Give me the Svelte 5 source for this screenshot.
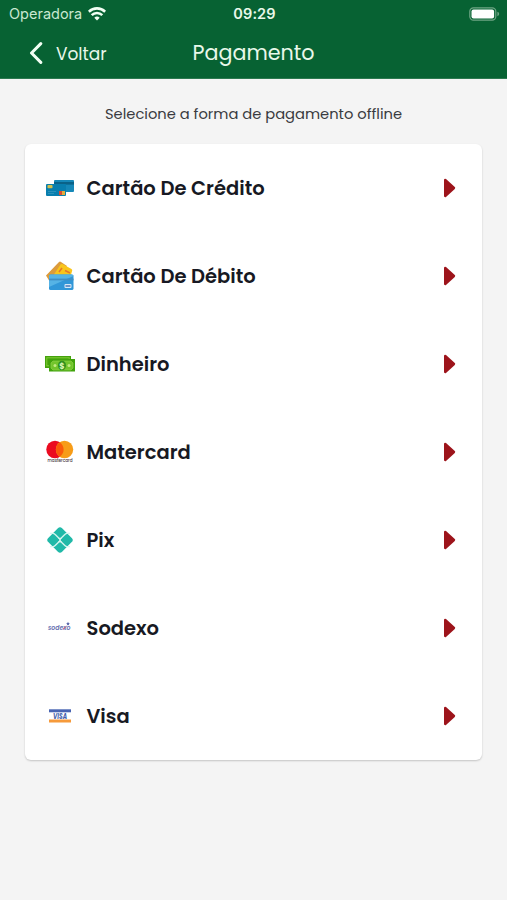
<script lang="ts">
  type Method = { id: string; label: string };

  const methods: Method[] = [
    { id: "credit", label: "Cartão De Crédito" },
    { id: "debit", label: "Cartão De Débito" },
    { id: "cash", label: "Dinheiro" },
    { id: "mastercard", label: "Matercard" },
    { id: "pix", label: "Pix" },
    { id: "sodexo", label: "Sodexo" },
    { id: "visa", label: "Visa" },
  ];
</script>

<div class="screen">
  <header>
    <div class="status">
      <div class="carrier">
        <span>Operadora</span>
        <svg width="18" height="14" viewBox="0 0 18 14" fill="none" stroke="#f2fff4" stroke-width="2.6">
          <path d="M.8 4.7a11.8 11.8 0 0 1 16.4 0" />
          <path d="M3.7 8.1a7.6 7.6 0 0 1 10.6 0" />
          <path d="M9 13.4 6.3 10.7a4 4 0 0 1 5.4 0Z" fill="#f2fff4" stroke="none" />
        </svg>
      </div>
      <span class="time">09:29</span>
      <svg class="battery" width="31" height="14" viewBox="0 0 31 14">
        <rect x=".8" y=".8" width="26" height="12.4" rx="3.6" fill="none" stroke="#6fa585" stroke-width="1.2" />
        <rect x="2.5" y="2.5" width="22.6" height="9" rx="2" fill="#fff" />
        <path d="M28.4 4.8q1.8.6 1.8 2.2t-1.8 2.2z" fill="#6fa585" />
      </svg>
    </div>
    <div class="nav">
      <button class="back">
        <svg width="14" height="22" viewBox="0 0 14 22" fill="none" stroke="#f2fff4" stroke-width="3">
          <path d="M11.8 1.6 2.5 11l9.3 9.4" stroke-linecap="round" stroke-linejoin="round" />
        </svg>
        <span>Voltar</span>
      </button>
      <h1>Pagamento</h1>
    </div>
  </header>

  <p class="hint">Selecione a forma de pagamento offline</p>

  <div class="card">
    {#each methods as m (m.id)}
      <button class="row">
        <svg class="logo" viewBox="0 0 30 30">
          {#if m.id === "credit"}
            <rect x="9" y="7" width="20" height="12" rx="1" fill="#1688b8" />
            <rect x="9" y="9" width="20" height="2.6" fill="#0a6288" />
            <rect x="1" y="11" width="20" height="12" rx="1" fill="#087eae" />
            <rect x="2.5" y="12" width="5" height="3.2" rx=".8" fill="#d3bf4b" />
            <path d="M3 18.5h8M3 20.5h6" stroke="#3396bd" stroke-width=".8" />
            <rect x="14" y="18" width="3" height="4" fill="#d74a32" />
            <rect x="17" y="18" width="3" height="4" fill="#e3ad3a" />
          {:else if m.id === "debit"}
            <path d="M1 14.5 14 1q1-1 2 0L22 5 11 21H5Z" fill="#dc9b3c" />
            <path d="m8 15 7.5-11.5q.7-1 1.800-.4L26.500 8q1.200.8.6 2L25 17H8Z" fill="#f9c51c" />
            <path d="m14 11 3-4M20 9.500l5 2.500" stroke="#e87829" stroke-width="1.6" />
            <rect x="4" y="13.5" width="24.5" height="15.5" rx="1.6" fill="#3197d8" />
            <path d="M5.6 13.500H27q1.500 0 1.500 1.500L4 26V15q0-1.500 1.600-1.500Z" fill="#56b3e5" />
            <path d="M4 18.500h24.500" stroke="#3f8fc4" stroke-width="1.8" />
            <rect x="19.5" y="23" width="7" height="4" rx="1" fill="#d7e9f6" />
            <path d="M20.500 25h5" stroke="#3971b8" stroke-width="1.4" />
          {:else if m.id === "cash"}
            <rect x="0" y="7" width="26" height="12" fill="#45a20d" />
            <rect x="1.8" y="8.8" width="22.4" height="8" fill="none" stroke="#80cc35" />
            <rect x="4" y="10" width="26" height="12.5" fill="#41a30c" />
            <path d="M8 12h18l2 2v5l-2 2H8l-2-2v-5Z" fill="#72c52b" stroke="#8ed048" stroke-width=".7" />
            <circle cx="10" cy="16.5" r="1.5" fill="#c1ea81" />
            <circle cx="24" cy="16.5" r="1.5" fill="#c1ea81" />
            <ellipse cx="17" cy="16.5" rx="4" ry="4.8" fill="#319021" />
            <text x="17" y="19.5" font-size="8" font-weight="700" text-anchor="middle" fill="#d8f5b4">$</text>
          {:else if m.id === "mastercard"}
            <circle cx="10" cy="12.5" r="8.7" fill="#eb0b20" />
            <circle cx="19.5" cy="12.5" r="8.7" fill="#f79c18" />
            <path d="M14.8 5.300a8.700 8.700 0 0 1 0 14.400 8.700 8.700 0 0 1 0-14.400Z" fill="#fa5a0a" />
            <text x="2.5" y="25" font-size="4.6" font-weight="500" textLength="25" lengthAdjust="spacingAndGlyphs" fill="#483b40">mastercard</text>
          {:else if m.id === "pix"}
            <rect x="5.2" y="5.2" width="19.6" height="19.6" rx="3" transform="rotate(45 15 15)" fill="#20b9a8" />
            <path d="M5 8.400h2.600q1.500 0 2.600 1.100l3.300 3.300q1.500 1.500 3 0l3.300-3.300q1.100-1.100 2.600-1.100H25M5 21.600h2.600q1.500 0 2.600-1.100l3.300-3.300q1.500-1.500 3 0l3.300 3.300q1.100 1.100 2.600 1.100H25" fill="none" stroke="#d4f5ef" stroke-width="1.3" />
            <path d="m13.500 13 3 4M16.500 13l-3 4" stroke="#d4f5ef" stroke-width="1" />
          {:else if m.id === "sodexo"}
            <text x="3" y="16.5" font-size="6.5" font-weight="600" font-style="italic" textLength="22.5" lengthAdjust="spacingAndGlyphs" fill="#6670b0">sodexo</text>
            <path d="m17.800 16.200 3.400-2.800" stroke="#e0566b" stroke-width=".9" />
            <path d="m23 8.800.6 1.200 1.300.2-1 .9.300 1.300-1.200-.6-1.200.6.300-1.300-1-.9 1.300-.2Z" fill="#5a68ad" />
          {:else}
            <rect x="4" y="8.3" width="22" height="3" fill="#4864b2" />
            <text x="15" y="17.8" font-size="8" font-weight="700" font-style="italic" text-anchor="middle" textLength="14" lengthAdjust="spacingAndGlyphs" fill="#4663ae">VISA</text>
            <rect x="4" y="18.5" width="22" height="3" fill="#f69a3b" />
          {/if}
        </svg>
        <span class="label">{m.label}</span>
        <svg class="arrow" width="13" height="20" viewBox="0 0 13 20">
          <path d="M2.2 2 11 10l-8.800 8Z" fill="#9d141b" stroke="#9d141b" stroke-width="2.4" stroke-linejoin="round" />
        </svg>
      </button>
    {/each}
  </div>
</div>

<style>
  :global(body) {
    background: #f4f4f4;
  }
  .screen {
    box-sizing: border-box;
    min-height: 900px;
    background: #f4f4f4;
    font-family: Poppins, Inter, "Liberation Sans", sans-serif;
    color: #171923;
  }
  button {
    padding: 0;
    border: none;
    background: none;
    color: inherit;
    font: inherit;
    text-align: left;
  }
  header {
    box-sizing: border-box;
    height: 79px;
    background: #076233;
    border-bottom: 1px solid #2c7950;
    color: #e9f8ea;
  }
  .status {
    display: grid;
    grid-template-columns: 1fr auto 1fr;
    align-items: center;
    height: 27px;
    padding: 0 7px 0 9px;
    font-family: Inter, sans-serif;
  }
  .carrier {
    display: flex;
    align-items: center;
    gap: 6px;
    font-size: 14.5px;
    color: #c9e8d1;
  }
  .time {
    font-size: 14.5px;
    font-weight: 600;
    letter-spacing: 0.1px;
  }
  .battery {
    justify-self: end;
  }
  .nav {
    display: grid;
    grid-template-columns: 1fr auto 1fr;
    align-items: center;
    height: 51px;
    padding: 0 29px;
  }
  .back {
    display: flex;
    align-items: center;
    gap: 13px;
    font-size: 17px;
  }
  .back span {
    padding-top: 2px;
  }
  h1 {
    margin: 0;
    font-size: 20.7px;
    font-weight: 400;
  }
  .hint {
    margin: 0;
    padding-top: 24px;
    height: 41px;
    line-height: 22px;
    font-size: 14.7px;
    text-align: center;
    color: #3a3b40;
  }
  .card {
    margin: 0 25px;
    border-radius: 6px;
    background: #fff;
    box-shadow: 0 1px 2px rgba(0, 0, 0, 0.2);
  }
  .row {
    display: flex;
    align-items: center;
    width: 100%;
    height: 88px;
    padding: 0 26px 0 20px;
  }
  .logo {
    flex: 0 0 auto;
    width: 30px;
    height: 30px;
  }
  .label {
    flex: 1;
    margin-left: 11.5px;
    font-size: 19.5px;
    font-weight: 600;
  }
</style>
